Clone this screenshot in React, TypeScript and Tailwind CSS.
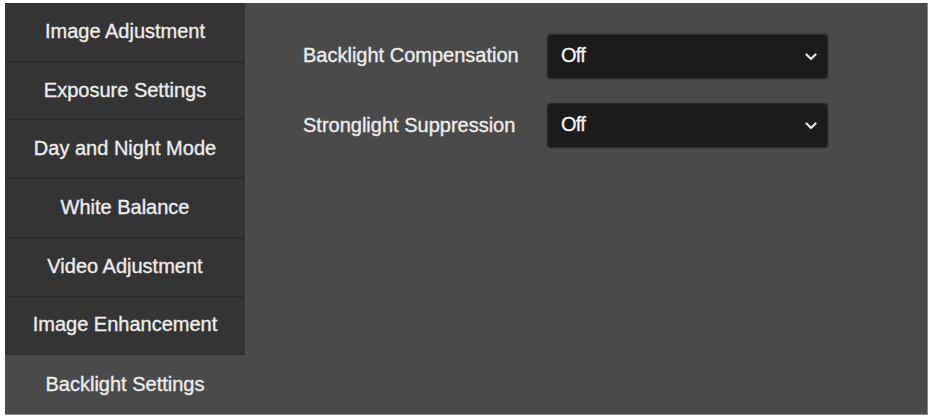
import React from "react";

const menu = [
  "Image Adjustment",
  "Exposure Settings",
  "Day and Night Mode",
  "White Balance",
  "Video Adjustment",
  "Image Enhancement",
  "Backlight Settings",
];

function Select({ value }: { value: string }) {
  return (
    <div className="flex h-[45px] w-[281px] items-center justify-between rounded-[4px] border border-[#2a2a2a] bg-[#1c1c1c] pl-[13px] pr-[10px] text-[20px] text-[#f2f2f2] shadow-[0_0_2px_rgba(0,0,0,0.4)]">
      <span className="mb-[4px] tracking-[-0.8px] [-webkit-text-stroke:0.3px_#f2f2f2]">{value}</span>
      <svg width="12" height="8" viewBox="0 0 12 8" fill="none">
        <path d="M1.5 1.5 6 6l4.5-4.5" stroke="#e6e6e6" strokeWidth="2.2" strokeLinecap="round" strokeLinejoin="round" />
      </svg>
    </div>
  );
}

const txt = "text-[20px] text-[#ececec] [-webkit-text-stroke:0.35px_#ececec]";

export default function App() {
  return (
    <div
      className="h-[420px] w-[931px] bg-white pl-[5px] pt-[3px]"
      style={{ fontFamily: '"Liberation Sans", Arial, sans-serif' }}
    >
      <div className="flex h-[412px] w-[923px] border-r border-b border-[#8a8a8a] bg-[#4a4a4a]">
        <div className="flex w-[240px] flex-col">
          {menu.map((m, i) => {
            const active = i === menu.length - 1;
            return (
              <div
                key={m}
                className={
                  active
                    ? `flex h-[60px] items-center justify-center pb-[2px] bg-[#4a4a4a] ${txt}`
                    : `flex h-[60px] items-center justify-center pb-[2px] border-b border-[#2b2b2b] bg-[#343434] ${txt}`
                }
              >
                {m}
              </div>
            );
          })}
        </div>
        <div className="flex flex-col gap-[24px] pl-[58px] pt-[31px]">
          <div className="flex items-center">
            <div className={`mb-[4px] w-[244px] ${txt}`}>Backlight Compensation</div>
            <Select value="Off" />
          </div>
          <div className="flex items-center">
            <div className={`mb-[2px] w-[244px] ${txt}`}>Stronglight Suppression</div>
            <Select value="Off" />
          </div>
        </div>
      </div>
    </div>
  );
}
